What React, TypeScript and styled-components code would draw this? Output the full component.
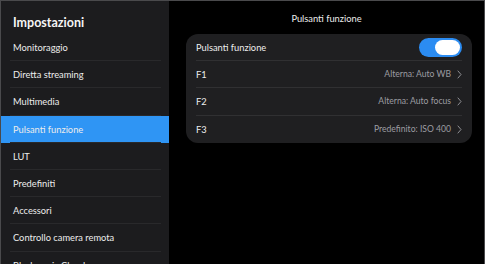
import React, { useState } from "react";
import styled, { createGlobalStyle } from "styled-components";

const GlobalStyle = createGlobalStyle`
  html, body {
    margin: 0;
    padding: 0;
    background: #000;
  }
  * {
    box-sizing: border-box;
  }
`;

interface MenuItem {
  label: string;
  active?: boolean;
}

interface FunctionRow {
  key: string;
  value: string;
}

const menuItems: MenuItem[] = [
  { label: "Monitoraggio" },
  { label: "Diretta streaming" },
  { label: "Multimedia" },
  { label: "Pulsanti funzione", active: true },
  { label: "LUT" },
  { label: "Predefiniti" },
  { label: "Accessori" },
  { label: "Controllo camera remota" },
  { label: "Blackmagic Cloud" },
];

const functionRows: FunctionRow[] = [
  { key: "F1", value: "Alterna: Auto WB" },
  { key: "F2", value: "Alterna: Auto focus" },
  { key: "F3", value: "Predefinito: ISO 400" },
];

const Chevron = () => (
  <ChevronIcon viewBox="0 0 5 9" width="5" height="9">
    <path d="M1 1l3 3.5L1 8" fill="none" stroke="#8e8e93" strokeWidth="1" strokeLinecap="round" strokeLinejoin="round" />
  </ChevronIcon>
);

export default function App() {
  const [enabled, setEnabled] = useState(true);

  return (
    <>
      <GlobalStyle />
      <Frame>
        <Sidebar>
          <SidebarTitle>Impostazioni</SidebarTitle>
          <MenuList>
            {menuItems.map((item) => (
              <MenuRow key={item.label} $active={item.active}>
                <MenuLabel>{item.label}</MenuLabel>
              </MenuRow>
            ))}
          </MenuList>
        </Sidebar>

        <Main>
          <PageTitle>Pulsanti funzione</PageTitle>
          <Card>
            <CardRow>
              <RowLabel>Pulsanti funzione</RowLabel>
              <Toggle $on={enabled} onClick={() => setEnabled(!enabled)}>
                <Knob />
              </Toggle>
            </CardRow>
            {functionRows.map((row) => (
              <CardRow key={row.key}>
                <RowLabel>{row.key}</RowLabel>
                <RowValue>
                  {row.value}
                  <Chevron />
                </RowValue>
              </CardRow>
            ))}
          </Card>
        </Main>
      </Frame>
    </>
  );
}

const Frame = styled.div`
  display: flex;
  width: 485px;
  height: 264px;
  border: 1px solid #4a4a4c;
  border-bottom: none;
  overflow: hidden;
  background: #000;
  font-family: Lato, "Noto Sans", sans-serif;
  color: #f2f2f2;
`;

const Sidebar = styled.nav`
  width: 168px;
  flex-shrink: 0;
  background: #1c1c1e;
  display: flex;
  flex-direction: column;
`;

const SidebarTitle = styled.h1`
  margin: 0;
  flex-shrink: 0;
  height: 33px;
  padding: 14px 0 0 12px;
  font-size: 12.5px;
  line-height: 15px;
  font-weight: 700;
  color: #f5f5f5;
`;

const MenuList = styled.ul`
  list-style: none;
  margin: 0;
  padding: 0;
  flex-shrink: 0;
`;

const MenuRow = styled.li<{ $active?: boolean }>`
  height: 27.2px;
  display: flex;
  align-items: center;
  background: ${(p) => (p.$active ? "#2f95f4" : "transparent")};
  position: relative;

  &::after {
    content: "";
    position: absolute;
    left: 9px;
    right: 8px;
    bottom: 0;
    height: 1px;
    background: #29292b;
  }
`;

const MenuLabel = styled.span`
  padding-left: 12px;
  font-size: 9.3px;
  color: #ececec;
`;

const Main = styled.main`
  flex: 1;
  display: flex;
  flex-direction: column;
  background: #000;
`;

const PageTitle = styled.h2`
  margin: 0;
  flex-shrink: 0;
  height: 33px;
  padding-top: 12px;
  line-height: 12px;
  text-align: center;
  font-size: 9.3px;
  font-weight: 400;
  color: #ececec;
`;

const Card = styled.section`
  margin: 0 12px 0 17px;
  background: #1f1f21;
  border-radius: 12px;
  padding: 0 10px;
`;

const CardRow = styled.div`
  height: 27.2px;
  display: flex;
  align-items: center;
  justify-content: space-between;
  border-bottom: 1px solid #303032;

  &:last-child {
    border-bottom: none;
  }
`;

const RowLabel = styled.span`
  font-size: 9.3px;
  color: #ededed;
`;

const RowValue = styled.span`
  display: flex;
  align-items: center;
  gap: 6px;
  font-size: 8.6px;
  color: #9d9da1;
`;

const ChevronIcon = styled.svg`
  display: block;
`;

const Toggle = styled.button<{ $on: boolean }>`
  width: 43px;
  height: 19px;
  border: none;
  border-radius: 10px;
  padding: 2px;
  background: ${(p) => (p.$on ? "#2b8cf2" : "#3a3a3c")};
  display: flex;
  justify-content: ${(p) => (p.$on ? "flex-end" : "flex-start")};
  cursor: pointer;
`;

const Knob = styled.span`
  width: 25px;
  height: 15px;
  border-radius: 8px;
  background: #ffffff;
`;
